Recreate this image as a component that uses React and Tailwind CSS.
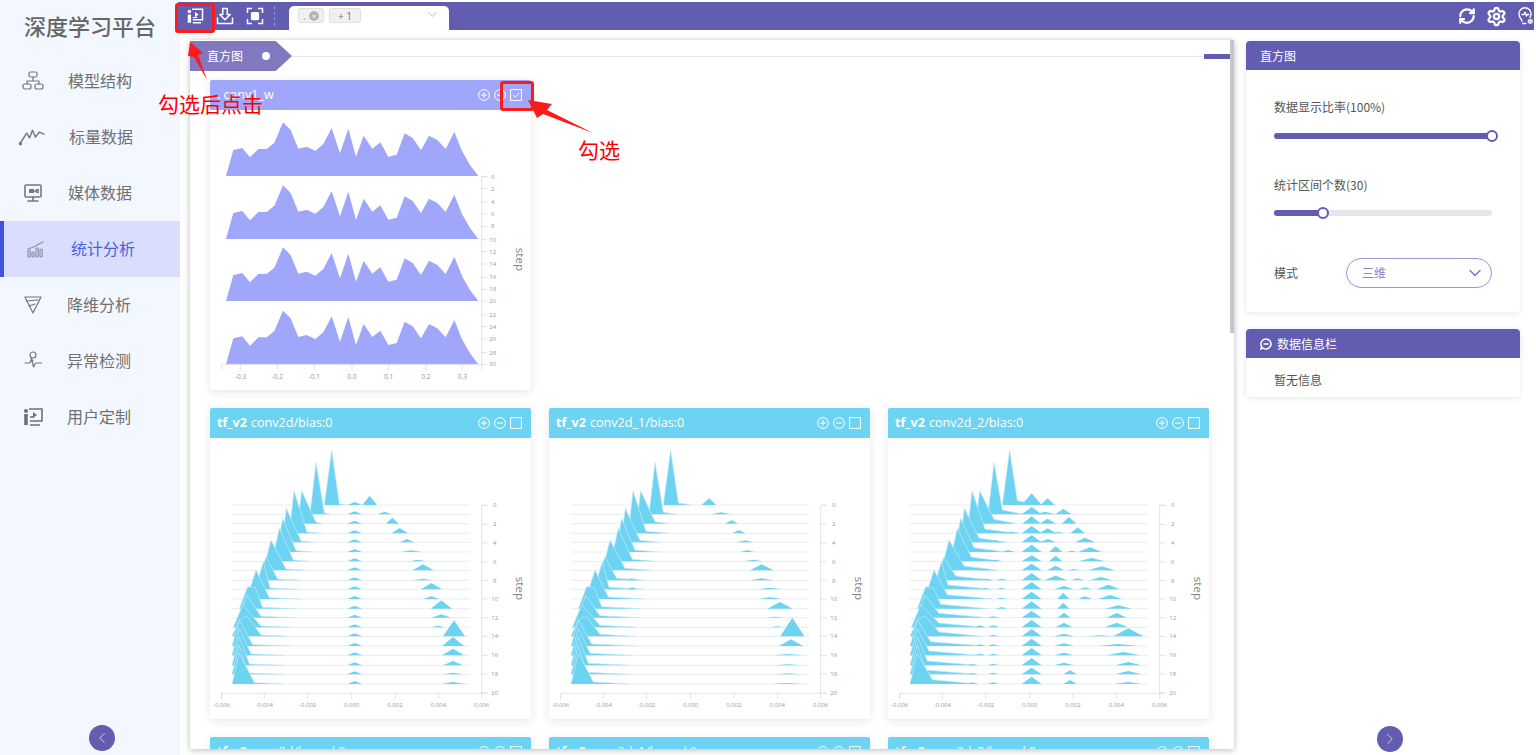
import React from 'react';
import { ChevronDown, ChevronLeft, ChevronRight, RefreshCw, Settings } from 'lucide-react';

const main = [
  [355, 377, 165, 400, 420], [312, 330, 156, 355, 375], [275, 287, 99, 330, 352], [250, 264, 128, 303, 350],
  [228, 241, 102, 285, 325], [212, 230, 101, 270, 320], [198, 220, 99, 262, 310], [172, 195, 91, 240, 300],
  [155, 180, 70, 215, 285], [148, 172, 83, 192, 280], [122, 150, 87, 190, 280], [100, 125, 66, 170, 270, 148, 63],
  [100, 122, 68, 165, 265], [82, 110, 67, 165, 255], [78, 100, 49, 165, 250, 122, 62], [78, 100, 78, 140, 255],
  [78, 100, 81, 135, 240], [78, 100, 86, 130, 235], [78, 100, 88, 125, 235], [78, 100, 92, 145, 235],
];
const bases = [300, 328, 356, 385, 412, 441, 469, 496, 526, 553, 582, 611, 638, 667, 694, 723, 751, 781, 808, 837];

const right1 = [
  [[491, 28, 22]], [[536, 8, 22]], [[559, 18, 20]], [[581, 16, 25]], [[603, 10, 22]], [[616, 5, 30]], [[636, 5, 25]], [[651, 18, 32]],
  [[650, 5, 30]], [[676, 19, 32]], [[676, 8, 25]], [[706, 25, 32]], [[706, 10, 30]], [[696, 5, 20]], [[744, 48, 33]], [[741, 27, 33]],
  [[741, 20, 33]], [[741, 13, 30]], [[741, 5, 30]], [[741, 6, 35]],
];
const chart1 = right1.map((r) => [[446, 9, 22], ...r]);

const chart2 = [
  [[492, 20, 22]], [[528, 6, 30]], [[560, 10, 20]], [[582, 10, 20], [330, 4, 20]], [[600, 6, 25]], [[607, 6, 20]], [[625, 5, 30]], [[650, 18, 35], [285, 2, 15]],
  [[650, 6, 35], [260, 6, 20]], [[675, 5, 35], [262, 6, 15]], [[675, 5, 35]], [[705, 20, 38]], [[690, 3, 30]], [[695, 3, 20]], [[742, 56, 36]], [[738, 20, 36]],
  [[730, 4, 45]], [[730, 3, 40]], [[730, 3, 40]], [[725, 3, 45]],
];

const chart3 = [
  [[443, 35, 30], [491, 20, 22]], [[443, 22, 30], [483, 8, 30], [538, 16, 25]], [[443, 22, 28], [491, 15, 25], [555, 20, 22]], [[443, 22, 30], [491, 15, 25], [581, 18, 22], [383, 5, 30], [523, 4, 20]],
  [[443, 22, 30], [491, 10, 25], [603, 14, 30], [333, 6, 25]], [[443, 22, 30], [515, 17, 20], [618, 14, 35], [373, 6, 20], [323, 6, 20], [563, 4, 15]], [[443, 18, 30], [515, 17, 20], [623, 10, 40], [333, 5, 20]], [[443, 20, 30], [515, 14, 25], [653, 12, 40], [303, 5, 20], [570, 4, 20]],
  [[443, 22, 30], [515, 14, 35], [581, 6, 20], [651, 10, 35], [308, 5, 18], [353, 5, 18]], [[443, 22, 30], [540, 10, 30], [603, 6, 20], [673, 14, 35], [303, 4, 18], [353, 4, 18]], [[443, 22, 30], [538, 18, 18], [603, 8, 20], [678, 12, 35], [353, 4, 18]], [[443, 22, 30], [538, 18, 18], [703, 10, 40], [353, 5, 18]],
  [[443, 20, 30], [540, 15, 20], [698, 14, 30], [328, 4, 20]], [[443, 22, 30], [540, 14, 25], [698, 14, 35], [288, 6, 15], [328, 6, 18]], [[443, 22, 30], [540, 8, 30], [733, 24, 45], [213, 5, 18], [328, 5, 18], [650, 3, 40]], [[443, 22, 30], [540, 8, 30], [703, 6, 60], [288, 5, 18], [328, 5, 18]],
  [[443, 22, 30], [540, 8, 30], [718, 10, 50], [288, 5, 18], [328, 5, 18]], [[443, 22, 30], [540, 8, 30], [733, 10, 40], [265, 4, 18], [328, 5, 18]], [[443, 20, 30], [558, 12, 20], [733, 10, 40], [265, 4, 18], [328, 5, 18]], [[443, 22, 30], [558, 12, 20], [733, 6, 40], [265, 5, 18], [328, 5, 18]],
];

function mainPath(b, m, tailH, tailX) {
  const [l, a, h, r, t, px, ph] = m;
  const mid = px ? `L${px} ${b - ph}` : '';
  return `M${l} ${b}L${a} ${b - h}${mid}L${r} ${b - tailH}L${t + tailX} ${b}`;
}

function Ridges({ peaks, tailH, tailX }) {
  const axis = '#dddddd';
  const xTicks = [[47, '-0.006'], [175, '-0.004'], [305, '-0.002'], [437, '0.000'], [567, '0.002'], [697, '0.004'], [827, '0.006']];
  const yTicks = [[301, '0'], [358, '2'], [414, '4'], [471, '6'], [527, '8'], [582, '10'], [638, '12'], [694, '14'], [751, '16'], [807, '18'], [864, '20']];
  return (
    <svg viewBox="12 99 963 843" className="block w-[321px] h-[281px]">
      {bases.map((b, i) => (
        <g key={i}>
          <line x1="78" x2="792" y1={b} y2={b} stroke="#e6e8ea" strokeWidth="2.5" />
          <path d={mainPath(b, main[i], tailH, tailX)} fill="#6dd3f2" stroke="#c9e9f5" strokeWidth="2" />
          {peaks[i].map(([c, ph, w], j) => (
            <path key={j} d={`M${c - w} ${b}L${c} ${b - ph}L${c + w} ${b}Z`} fill="#6dd3f2" />
          ))}
        </g>
      ))}
      <path d="M47 882V865H827M845 301H827V865M845 865H827" fill="none" stroke={axis} strokeWidth="2.5" />
      {xTicks.map(([x, s]) => (
        <g key={s}>
          <line x1={x} x2={x} y1="865" y2="882" stroke={axis} strokeWidth="2.5" />
          <text x={x} y="906" textAnchor="middle" fontSize="18" fill="#999">{s}</text>
        </g>
      ))}
      {yTicks.map(([y, s]) => (
        <g key={s}>
          <line x1="827" x2="845" y1={y} y2={y} stroke={axis} strokeWidth="2.5" />
          <text x="866" y={y + 6} textAnchor="middle" fontSize="18" fill="#999">{s}</text>
        </g>
      ))}
      <text transform="translate(930 550) rotate(90)" textAnchor="middle" fontSize="35" fill="#888">step</text>
    </svg>
  );
}

const xs = [78, 100, 127, 150, 175, 200, 223, 249, 272, 295, 320, 346, 370, 395, 420, 445, 468, 491, 517, 541, 565, 590, 614, 638, 663, 687, 712, 737, 763, 786, 810, 835];
const ys = [0, 78, 84, 56, 81, 81, 100, 161, 138, 82, 88, 76, 96, 144, 68, 142, 58, 121, 82, 101, 58, 64, 128, 114, 78, 121, 108, 81, 133, 75, 33, 0];

function Flat() {
  const axis = '#dddddd';
  const x = [[122, '-0.3'], [232, '-0.2'], [343, '-0.1'], [456, '0.0'], [566, '0.1'], [678, '0.2'], [787, '0.3']];
  const y = [320, 356, 396, 432, 469, 509, 545, 582, 622, 658, 693, 735, 770, 807, 848, 883];
  return (
    <svg viewBox="30 120 963 840" className="block w-[321px] h-[280px]">
      {[318, 507, 693, 883].map((b) => (
        <path key={b} d={'M' + xs.map((px, i) => `${px} ${b - ys[i]}`).join('L') + 'Z'} fill="#a0a7fa" />
      ))}
      <path d="M65 900V883H845M862 320H845V883" fill="none" stroke={axis} strokeWidth="2.5" />
      <line x1="845" x2="845" y1="883" y2="900" stroke={axis} strokeWidth="2.5" />
      {x.map(([px, s]) => (
        <g key={s}>
          <line x1={px} x2={px} y1="883" y2="900" stroke={axis} strokeWidth="2.5" />
          <text x={px} y="927" textAnchor="middle" fontSize="20" fill="#999">{s}</text>
        </g>
      ))}
      {y.map((py, i) => (
        <g key={py}>
          <line x1="845" x2="862" y1={py} y2={py} stroke={axis} strokeWidth="2.5" />
          <text x="878" y={py + 6} textAnchor="middle" fontSize="18" fill="#999">{i * 2}</text>
        </g>
      ))}
      <text transform="translate(948 568) rotate(90)" textAnchor="middle" fontSize="35" fill="#888">step</text>
    </svg>
  );
}

function CardIcons({ checked }) {
  return (
    <div className="flex items-center gap-[4px] pr-[9px] ml-auto">
      <svg viewBox="0 0 12 12" className="w-[12px] h-[12px]" fill="none" stroke="white" strokeWidth="1"><circle cx="6" cy="6" r="5.4" /><path d="M3 6h6M6 3v6" /></svg>
      <svg viewBox="0 0 12 12" className="w-[12px] h-[12px]" fill="none" stroke="white" strokeWidth="1"><circle cx="6" cy="6" r="5.4" /><path d="M3 6h6" /></svg>
      <svg viewBox="0 0 12 12" className="w-[12px] h-[12px]" fill="none" stroke="white" strokeWidth="1"><rect x="0.6" y="0.6" width="10.8" height="10.8" />{checked && <path d="M3 6l2.2 2.2L9 4" />}</svg>
    </div>
  );
}

function Card({ head, name, children }) {
  return (
    <div className="w-[321px] bg-white rounded-[2px] shadow-[0_2px_10px_rgba(0,0,0,0.10)]">
      <div className="h-[30px] bg-[#6dd3f2] rounded-t-[2px] flex items-center pl-[7px] text-white text-[12.6px]">
        <span className="font-bold">{head}</span>
        <span className="ml-[4px]">{name}</span>
        <CardIcons />
      </div>
      {children}
    </div>
  );
}

const ic = { fill: 'none', stroke: '#777777', strokeWidth: 1.2, strokeLinecap: 'round', strokeLinejoin: 'round' };
const navIcons = [
  <svg viewBox="0 0 24 24" className="w-[24px] h-[24px]" {...ic}><rect x="8" y="3" width="8" height="5" rx="1.5" /><rect x="2" y="15" width="8" height="5" rx="2" /><rect x="14" y="15" width="8" height="5" rx="2" /><path d="M12 8v4M6 15v-3h12v3" /></svg>,
  <svg viewBox="0 0 28 24" className="w-[28px] h-[24px] -ml-[3px]" {...ic} strokeWidth="1.5"><path d="M2 19L9 8l3 5 3-8 3 7 4-5 5 2" /><circle cx="2.5" cy="19" r="1" fill="#6b6b6b" /></svg>,
  <svg viewBox="0 0 24 24" className="w-[24px] h-[24px]" {...ic} strokeWidth="1.6"><rect x="4" y="4" width="16" height="12" rx="1" /><rect x="8" y="8" width="5" height="4" fill="#777777" stroke="none" /><path d="M14 10l3-1.500v3zM12 16v3M7 20h10" /></svg>,
  <svg viewBox="0 0 24 24" className="w-[24px] h-[24px]" fill="none" stroke="#8f8fa8" strokeWidth="1.2" strokeLinecap="round"><path d="M4 12l8-3 1-1 6-3" /><rect x="4" y="13" width="2.200" height="7" rx="1" /><rect x="8" y="15" width="2.200" height="5" rx="1" /><rect x="12" y="11" width="2.200" height="9" rx="1" /><rect x="16" y="12" width="2.200" height="8" rx="1" /></svg>,
  <svg viewBox="0 0 24 24" className="w-[24px] h-[24px]" {...ic}><path d="M4 4h16l-8 16z" /><path d="M5 8l12-1M8 13l6-2" /></svg>,
  <svg viewBox="0 0 24 24" className="w-[24px] h-[24px]" {...ic}><circle cx="12" cy="6" r="3" /><path d="M4 14h5l1.500-4 2 8 2-4h6M10 9l2 3" /></svg>,
  <svg viewBox="0 0 24 24" className="w-[24px] h-[24px]" fill="none" stroke="#707070" strokeWidth="1.6"><circle cx="5" cy="6" r="2" fill="#707070" stroke="none" /><path d="M5 9v11" strokeWidth="3.600" /><path d="M8 4h13v12H9M9 20h10" /><path d="M12 7l4 3-4 3z" fill="#707070" stroke="none" /><path d="M9 12h4" /></svg>,
];

const nav = [
  { t: '模型结构', box: 'pl-[21px]', txt: 'ml-[23px] text-[#707070]' },
  { t: '标量数据', box: 'pl-[21px]', txt: 'ml-[24px] text-[#707070]' },
  { t: '媒体数据', box: 'pl-[21px]', txt: 'ml-[23px] text-[#707070]' },
  { t: '统计分析', box: 'pl-[20px] border-l-[4px] border-[#3e52dd] bg-[#d9deff]', txt: 'ml-[23px] text-[#4f5fe0]' },
  { t: '降维分析', box: 'pl-[21px]', txt: 'ml-[22px] text-[#707070]' },
  { t: '异常检测', box: 'pl-[21px]', txt: 'ml-[22px] text-[#707070]' },
  { t: '用户定制', box: 'pl-[21px]', txt: 'ml-[22px] text-[#707070]' },
];

function Slider({ fill }) {
  return (
    <div className="relative h-[6px] w-[218px] rounded-full bg-[#e4e7ec]">
      <div className={`h-full rounded-full bg-[#625db0] ${fill}`} />
    </div>
  );
}

function Thumb({ pos }) {
  return <div className={`absolute top-[-3px] w-[12px] h-[12px] rounded-full bg-white border-2 border-[#625db0] ${pos}`} />;
}

export default function App() {
  return (
    <div className="relative flex w-[1536px] h-[755px] overflow-hidden bg-white font-['Open_Sans','Noto_Sans_CJK_SC',sans-serif]">
      <aside className="w-[180px] h-full shrink-0 flex flex-col bg-[#f3f7ff]">
        <div className="h-[53px] pl-[24px] pt-[9px] text-[22px] leading-[32px] font-medium text-[#666666] font-['Noto_Sans_CJK_SC',sans-serif]">深度学习平台</div>
        {nav.map((n, i) => (
          <div key={n.t} className={`h-[56px] flex items-center ${n.box}`}>
            <div className="w-[24px] h-[24px] flex items-center">{navIcons[i]}</div>
            <span className={`pb-[2px] text-[16px] font-['Noto_Sans_CJK_SC',sans-serif] ${n.txt}`}>{n.t}</span>
          </div>
        ))}
        <div className="mt-auto mb-[4px] ml-[89px] w-[26px] h-[26px] rounded-full bg-[#625db0] flex items-center justify-center">
          <ChevronLeft size={18} strokeWidth={1.2} color="#d8d6f0" />
        </div>
      </aside>

      <div className="flex-1 min-w-0 flex flex-col">
        <header className="mt-[2px] -ml-[2px] mr-[2px] h-[28px] shrink-0 bg-[#625db0] flex items-center pl-[8px] text-white">
          <svg viewBox="0 0 24 24" className="w-[18px] h-[18px]" fill="none" stroke="white" strokeWidth="2"><circle cx="4.500" cy="6" r="2.400" fill="white" stroke="none" /><path d="M4.500 10v11" strokeWidth="4.500" /><path d="M8 3h14v14H9M9 21h11" /><path d="M12 6.500l5 3.500-5 3.500z" fill="white" stroke="none" /><path d="M9 14h6" strokeWidth="1.500" /></svg>
          <svg viewBox="0 0 24 24" className="w-[18px] h-[18px] ml-[12px]" fill="none" stroke="white" strokeWidth="2" strokeLinejoin="round"><path d="M9 2h6v8h4l-7 7-7-7h4z" /><path d="M2 14v8h20v-8" /></svg>
          <svg viewBox="0 0 24 24" className="w-[18px] h-[18px] ml-[12px]" fill="none" stroke="white" strokeWidth="2"><path d="M2 8V2h6M16 2h6v6M22 16v6h-6M8 22H2v-6" /><rect x="6.500" y="6.500" width="11" height="11" rx="2" fill="white" stroke="none" /></svg>
          <div className="ml-[10px] h-[20px] border-l border-dashed border-[#9b97cf]" />
          <div className="ml-[14px] self-end w-[160px] h-[24px] bg-white rounded-t-[5px] flex items-start pl-[9px] pt-[2px]">
            <div className="h-[15px] w-[26px] bg-[#f0f0f2] border border-[#e0e0e0] rounded-[3px] flex items-center justify-between px-[4px] text-[10px] leading-none text-[#888]">
              <span>.</span>
              <span className="w-[10px] h-[10px] rounded-full bg-[#b5b5b5] text-white text-[8px] flex items-center justify-center">×</span>
            </div>
            <div className="ml-[5px] h-[15px] w-[32px] bg-[#f0f0f2] border border-[#e0e0e0] rounded-[3px] flex items-center justify-center text-[10px] leading-none text-[#777]">+ 1</div>
            <ChevronDown size={15} strokeWidth={1} color="#9a9a9a" className="ml-[64px] -mt-[1px]" />
          </div>
          <RefreshCw size={18} strokeWidth={3} className="ml-auto" />
          <Settings size={21} strokeWidth={2.6} className="ml-[10px]" />
          <svg viewBox="0 0 24 24" className="w-[18px] h-[20px] ml-[9px]" fill="none" stroke="white" strokeWidth="1.800" strokeLinecap="round" strokeLinejoin="round"><path d="M8 19c0-3-4-4-4-10a8 8 0 0 1 16 0c0 2-.500 3.500-1.500 5" /><path d="M8 10h2.500l1.500-3 2 5 1-2h2" /><path d="M9 22h4" /><circle cx="19" cy="19" r="3.500" fill="#dddddd" stroke="none" /></svg>
        </header>

        <div className="flex-1 min-h-0 flex gap-[12px] pl-[10px] pr-[16px] pt-[10px]">
          <section className="w-[1044px] h-[709px] shrink-0 flex bg-white overflow-hidden shadow-[0_1px_6px_rgba(0,0,0,0.28)]">
            <div className="w-[1040px] shrink-0">
              <div className="mt-[1px] h-[30px] flex items-center">
                <div className="w-[102px] h-[30px] shrink-0 bg-[#8079c0] flex items-center pl-[17px] text-[12px] text-white [clip-path:polygon(0_0,84%_0,100%_50%,84%_100%,0_100%)]">
                  <span className="font-['Noto_Sans_CJK_SC',sans-serif]">直方图</span>
                  <span className="ml-[19px] w-[8px] h-[8px] rounded-full bg-white" />
                </div>
                <div className="flex-1 h-px bg-[#e5e7eb]" />
                <div className="w-[26px] h-[5px] bg-[#625db0]" />
              </div>
              <div className="pl-[20px] pt-[9px] grid grid-cols-[321px_321px_321px] gap-[18px]">
                <div className="col-span-3 w-[321px] bg-white rounded-[2px] shadow-[0_2px_10px_rgba(0,0,0,0.10)]">
                  <div className="h-[30px] bg-[#a0a7fa] rounded-t-[2px] flex items-center pl-[7px] text-white text-[12.6px]">
                    <span>. conv1_w</span>
                    <CardIcons checked />
                  </div>
                  <Flat />
                </div>
                <Card head="tf_v2" name="conv2d/bias:0"><Ridges peaks={chart1} tailH={4} tailX={0} /></Card>
                <Card head="tf_v2" name="conv2d_1/bias:0"><Ridges peaks={chart2} tailH={6} tailX={20} /></Card>
                <Card head="tf_v2" name="conv2d_2/bias:0"><Ridges peaks={chart3} tailH={13} tailX={45} /></Card>
                <Card head="tf_v2" name="conv2d/kernel:0" />
                <Card head="tf_v2" name="conv2d_1/kernel:0" />
                <Card head="tf_v2" name="conv2d_2/kernel:0" />
              </div>
            </div>
            <div className="w-[4px] h-[293px] bg-[#c6c6c6]" />
          </section>

          <div className="w-[274px] shrink-0 flex flex-col pt-[1px] font-['Noto_Sans_CJK_SC',sans-serif]">
            <div className="h-[271px] bg-white rounded-[4px] shadow-[0_1px_6px_rgba(0,0,0,0.10)]">
              <div className="h-[29px] bg-[#625db0] rounded-t-[4px] flex items-center pl-[14px] text-[12px] text-white">直方图</div>
              <div className="pl-[28px] pt-[28px] text-[12px] leading-[18px] text-[#555555]">
                <div>数据显示比率(100%)</div>
                <div className="relative mt-[17px] w-[218px]">
                  <Slider fill="w-full" />
                  <Thumb pos="left-[212px]" />
                </div>
                <div className="mt-[37px]">统计区间个数(30)</div>
                <div className="relative mt-[16px] w-[218px]">
                  <Slider fill="w-[48px]" />
                  <Thumb pos="left-[43px]" />
                </div>
                <div className="mt-[42px] flex items-center">
                  <span className="w-[72px]">模式</span>
                  <div className="w-[146px] h-[30px] rounded-full border border-[#9a94d4] flex items-center pl-[15px] pr-[6px] text-[#8a84c8]">
                    <span>三维</span>
                    <ChevronDown size={20} strokeWidth={1.8} color="#7d77c2" className="ml-auto" />
                  </div>
                </div>
              </div>
            </div>
            <div className="mt-[17px] h-[68px] bg-white rounded-[4px] shadow-[0_1px_6px_rgba(0,0,0,0.10)]">
              <div className="h-[29px] bg-[#625db0] rounded-t-[4px] flex items-center pl-[14px] text-[12px] text-white">
                <svg viewBox="0 0 12 12" className="w-[12px] h-[12px]" fill="none" stroke="white" strokeWidth="1.500"><path d="M6 1a5 5 0 1 1-3 9l-2 1 .6-2.500A5 5 0 0 1 6 1z" /><path d="M3.500 6h5" /></svg>
                <span className="ml-[5px]">数据信息栏</span>
              </div>
              <div className="pl-[28px] pt-[13px] text-[12px] leading-[18px] text-[#555555]">暂无信息</div>
            </div>
            <div className="mt-auto mb-[3px] ml-[131px] w-[26px] h-[26px] rounded-full bg-[#625db0] flex items-center justify-center">
              <ChevronRight size={18} strokeWidth={1.2} color="#d8d6f0" />
            </div>
          </div>
        </div>
      </div>

      <div className="absolute left-[175px] top-[3px] w-[40px] h-[30px] border-[3px] border-[#ff1a1a] rounded-[3px]" />
      <div className="absolute left-[500px] top-[81px] w-[34px] h-[30px] border-[3px] border-[#ff1a1a] rounded-[3px]" />
      <svg viewBox="0 0 1536 755" className="absolute left-0 top-0 w-[1536px] h-[755px] pointer-events-none">
        <polygon points="190,42 203,53 198,55 207,80 194,57 188,56" fill="#ff1a1a" />
        <polygon points="528,100 552,104 547,110 593,133 543,114 537,118" fill="#ff1a1a" />
      </svg>
      <div className="absolute left-[158px] top-[88px] text-[21px] leading-[30px] text-[#ff0000] font-['Noto_Sans_CJK_SC',sans-serif]">勾选后点击</div>
      <div className="absolute left-[578px] top-[134px] text-[21px] leading-[30px] text-[#ff0000] font-['Noto_Sans_CJK_SC',sans-serif]">勾选</div>
    </div>
  );
}
